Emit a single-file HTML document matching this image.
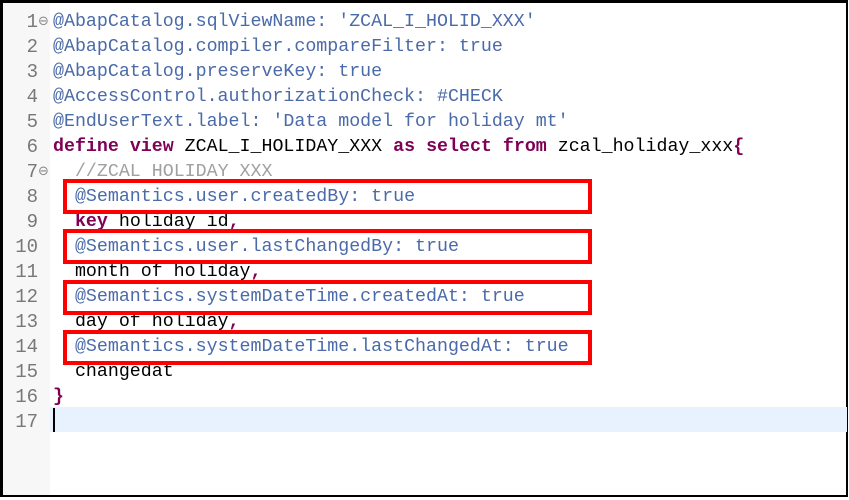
<!DOCTYPE html>
<html><head><meta charset="utf-8"><style>
html,body{margin:0;padding:0;background:#fff;}
body{width:849px;height:498px;position:relative;overflow:hidden;}
.frame{position:absolute;left:0;top:0;width:843px;height:492px;border:3px solid #000;border-right-width:2px;border-bottom-width:2px;}
.gutter{position:absolute;left:3px;top:3px;width:47px;height:492px;background:#f7f7f7;}
.hl{position:absolute;left:50px;top:407px;width:797px;height:25px;background:#e8f2fe;}
.caret{position:absolute;left:53px;top:408px;width:2px;height:24px;background:#000;}
.t{position:absolute;left:0;top:2px;width:849px;height:498px;}
.ln{position:absolute;left:0;width:38px;text-align:right;font:19px/25px "Liberation Mono",monospace;color:#787878;}
.fold{position:absolute;left:38px;font:13px/25px "DejaVu Sans",sans-serif;color:#888;}
.code{position:absolute;left:53px;font:18.3px/25px "Liberation Mono",monospace;color:#000;white-space:pre;}
.a{color:#4a6aa8;}
.k{color:#7f0055;font-weight:bold;}
.c{color:#a0a0a0;}
.box{position:absolute;left:63px;width:521px;height:27px;border:4px solid #f00;}
</style></head><body>
<div class="frame"></div>
<div class="gutter"></div>
<div class="hl"></div>
<div class="caret"></div>
<div class="t">
<div class="ln" style="top:8px">1</div><div class="fold" style="top:7px">⊖</div>
<div class="ln" style="top:33px">2</div>
<div class="ln" style="top:58px">3</div>
<div class="ln" style="top:83px">4</div>
<div class="ln" style="top:108px">5</div>
<div class="ln" style="top:133px">6</div>
<div class="ln" style="top:158px">7</div><div class="fold" style="top:157px">⊖</div>
<div class="ln" style="top:183px">8</div>
<div class="ln" style="top:208px">9</div>
<div class="ln" style="top:233px">10</div>
<div class="ln" style="top:258px">11</div>
<div class="ln" style="top:283px">12</div>
<div class="ln" style="top:308px">13</div>
<div class="ln" style="top:333px">14</div>
<div class="ln" style="top:358px">15</div>
<div class="ln" style="top:383px">16</div>
<div class="ln" style="top:408px">17</div>
<div class="code" style="top:8px"><span class="a">@AbapCatalog.sqlViewName: 'ZCAL_I_HOLID_XXX'</span></div>
<div class="code" style="top:33px"><span class="a">@AbapCatalog.compiler.compareFilter: true</span></div>
<div class="code" style="top:58px"><span class="a">@AbapCatalog.preserveKey: true</span></div>
<div class="code" style="top:83px"><span class="a">@AccessControl.authorizationCheck: #CHECK</span></div>
<div class="code" style="top:108px"><span class="a">@EndUserText.label: 'Data model for holiday mt'</span></div>
<div class="code" style="top:133px"><span class="k">define</span> <span class="k">view</span> ZCAL_I_HOLIDAY_XXX <span class="k">as</span> <span class="k">select</span> <span class="k">from</span> zcal_holiday_xxx<span class="k">{</span></div>
<div class="code" style="top:158px">  <span class="c">//ZCAL HOLIDAY XXX</span></div>
<div class="code" style="top:183px">  <span class="a">@Semantics.user.createdBy: true</span></div>
<div class="code" style="top:208px">  <span class="k">key</span> holiday id<span class="k">,</span></div>
<div class="code" style="top:233px">  <span class="a">@Semantics.user.lastChangedBy: true</span></div>
<div class="code" style="top:258px">  month of holiday<span class="k">,</span></div>
<div class="code" style="top:283px">  <span class="a">@Semantics.systemDateTime.createdAt: true</span></div>
<div class="code" style="top:308px">  day of holiday<span class="k">,</span></div>
<div class="code" style="top:333px">  <span class="a">@Semantics.systemDateTime.lastChangedAt: true</span></div>
<div class="code" style="top:358px">  changedat</div>
<div class="code" style="top:383px"><span class="k">}</span></div>
</div>
<div class="box" style="top:179px"></div>
<div class="box" style="top:229px"></div>
<div class="box" style="top:280px"></div>
<div class="box" style="top:330px"></div>
</body></html>
